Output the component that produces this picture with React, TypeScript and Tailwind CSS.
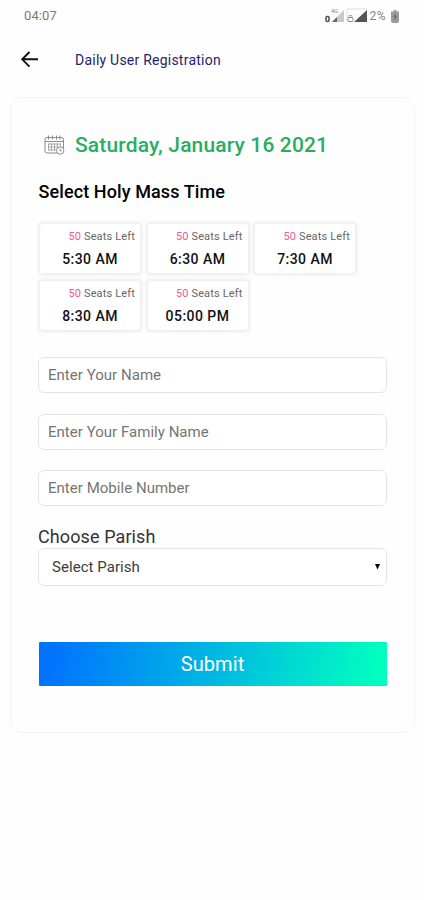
import { useState } from 'react'

interface Slot {
  time: string
  seats: number
}

const slots: Slot[] = [
  { time: '5:30 AM', seats: 50 },
  { time: '6:30 AM', seats: 50 },
  { time: '7:30 AM', seats: 50 },
  { time: '8:30 AM', seats: 50 },
  { time: '05:00 PM', seats: 50 },
]

const fields = ['Enter Your Name', 'Enter Your Family Name', 'Enter Mobile Number']

function StatusBar() {
  return (
    <div className="flex h-8 items-center justify-between pl-6 pr-[25px] text-[13px] text-[#7a7a7a]">
      <span className="tracking-[0.1px]">04:07</span>
      <div className="flex items-center">
        <svg width="44" height="16" viewBox="0 0 44 16" className="mr-[1px]">
          <text x="7" y="5" fontSize="6" fill="#888">4G</text>
          <path d="M8 14 20 2v12z" fill="#c9c9c9" />
          <path d="M8 14l5-5V14z" fill="#666" />
          <rect x="2" y="8.5" width="3" height="5" rx="1" fill="none" stroke="#555" strokeWidth="1.6" />
          <path d="M23 14V1h20" fill="none" stroke="#dedede" />
          <path d="M30 14 43 2v12z" fill="#555" />
          <rect x="24" y="9.5" width="5" height="4" rx="1" fill="none" stroke="#888" />
          <path d="M25 9V7.5h3V9" fill="none" stroke="#aaa" />
        </svg>
        <span className="text-[12px] tracking-[0.5px] text-[#858585]">2%</span>
        <svg width="8" height="13" viewBox="0 0 8 13" className="ml-[5px]">
          <path d="M2.5 0h3v1.5H8V11a2 2 0 0 1-2 2H2a2 2 0 0 1-2-2V1.5h2.5z" fill="#9a9a9a" />
          <path d="M4.8 3 2.3 7h1.5L3.3 10.5 6 6.2H4.4z" fill="#666" />
        </svg>
      </div>
    </div>
  )
}

function CalendarIcon() {
  return (
    <svg width="21" height="20" viewBox="0 0 21 20" fill="none" stroke="#8c8c8c" strokeWidth="1">
      <path d="M13 18H3a2 2 0 0 1-2-2V4.5a2 2 0 0 1 2-2h14.500a2 2 0 0 1 2 2V13" />
      <path d="M1 6.500h18.500" />
      <path d="M4.500.5v4M8.500.5v4M12.500.5v4M16 .5v4" />
      <path d="M4.500 8.500v7M7.500 8.500v7M10.500 8.500v7M13.500 8.500v4M16.500 8.500v3M4 9h13M4 12h9M4 15h8" strokeOpacity="0.7" />
      <circle cx="16.200" cy="15.500" r="3.700" fill="#fff" />
      <path d="M16 13.500v2.300h1.800" />
    </svg>
  )
}

function SlotCard({ slot, onSelect }: { slot: Slot; onSelect: () => void }) {
  return (
    <button
      type="button"
      onClick={onSelect}
      className="flex h-[51px] flex-col rounded-[3px] border border-[#f0f0f0] bg-white pt-[5px] shadow-[0_0_4px_rgba(0,0,0,0.12)]"
    >
      <span className="w-full pr-[5px] text-right text-[11px] leading-4 tracking-[0.15px] text-[#666]">
        <span className="text-[#f5568c]">{slot.seats}</span> Seats Left
      </span>
      <span className="mt-[5px] w-full text-center text-[14px] font-medium leading-[18px] tracking-[0.45px] text-[#111]">
        {slot.time}
      </span>
    </button>
  )
}

export default function App() {
  const [, setSelected] = useState<string | null>(null)

  return (
    <div className="h-[900px] w-[424px] overflow-hidden bg-[#fefefe] font-[Roboto,sans-serif]">
      <StatusBar />
      <header className="flex h-[65px] items-start pl-5 pt-[18px]">
        <button type="button" aria-label="Back" className="h-5 w-5">
          <svg width="20" height="20" viewBox="0 0 20 20" fill="none" stroke="#111" strokeWidth="1.9">
            <path d="M18 9.3H2.7M9.5 2 2.2 9.3l7.3 7.3" />
          </svg>
        </button>
        <h1 className="ml-[35px] text-[14px] leading-5 tracking-[0.23px] text-[#24246c]">Daily User Registration</h1>
      </header>

      <main className="ml-[10px] h-[636px] w-[405px] rounded-[12px] border border-[#f4f4f4] pl-[27px] pr-[27px] pt-[33px]">
        <div className="flex h-[28px] items-center">
          <div className="ml-[6px] w-[31px]">
            <CalendarIcon />
          </div>
          <h2 className="whitespace-nowrap text-[21px] font-medium leading-7 tracking-[0.15px] text-[#28ae61]">
            Saturday, January 16 2021
          </h2>
        </div>
        <h3 className="mt-[21px] pl-[0.5px] text-[18px] font-medium leading-6 tracking-[0.1px] text-black">Select Holy Mass Time</h3>

        <div className="ml-px mt-[19px] grid grid-cols-[102px_102px_102px] gap-x-[5.500px] gap-y-[6px]">
          {slots.map((slot) => (
            <SlotCard key={slot.time} slot={slot} onSelect={() => setSelected(slot.time)} />
          ))}
        </div>

        <form className="mt-[26px]" onSubmit={(e) => e.preventDefault()}>
          <div className="flex flex-col gap-[20.5px]">
            {fields.map((field) => (
              <input
                key={field}
                placeholder={field}
                className="h-[36px] w-full rounded-[6px] border border-[#e5e5e5] bg-white px-[9px] text-[15px] tracking-[0.03px] outline-none placeholder:text-[#757575]"
              />
            ))}
          </div>

          <label className="mt-[20px] block text-[18px] leading-[22px] tracking-[0.1px] text-[#333]">Choose Parish</label>
          <button
            type="button"
            className="flex h-[38px] w-full items-center justify-between rounded-[6px] border border-[#e5e5e5] bg-white pl-[13px] pr-[6px] text-[15px] tracking-[0.05px] text-[#3c3c3c]"
          >
            Select Parish
            <svg width="5" height="6" viewBox="0 0 5 6">
              <path d="M0 0h5L2.500 5.500z" fill="#000" />
            </svg>
          </button>

          <button
            type="submit"
            className="ml-[0.5px] mt-[56px] h-[43.500px] w-[348px] rounded-[1px] bg-[linear-gradient(100deg,#0072ff_3%,#00c6dc_60%,#00ffbf_97%)] text-[20px] tracking-[0.1px] text-white"
          >
            Submit
          </button>
        </form>
      </main>
    </div>
  )
}
